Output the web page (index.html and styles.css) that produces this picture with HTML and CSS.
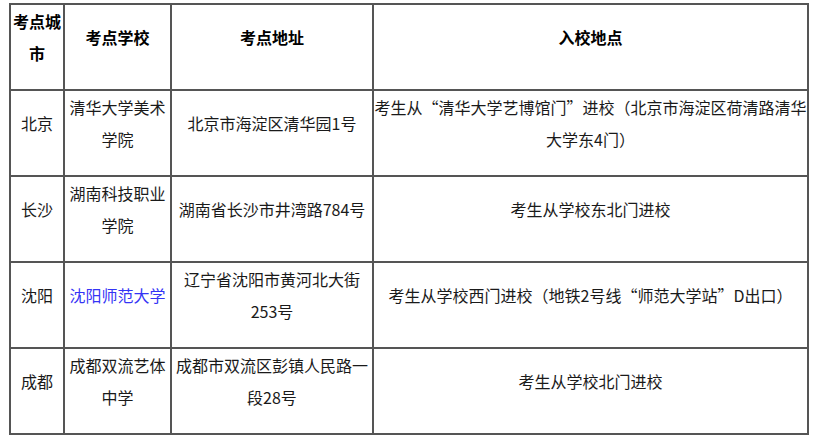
FILE: index.html
```html
<!DOCTYPE html>
<html lang="zh-CN">
<head>
<meta charset="utf-8">
<link rel="stylesheet" href="styles.css">
</head>
<body>
<table class="exam">
  <colgroup>
    <col class="c-city">
    <col class="c-school">
    <col class="c-addr">
    <col class="c-entry">
  </colgroup>
  <thead>
    <tr>
      <th>考点城市</th>
      <th>考点学校</th>
      <th>考点地址</th>
      <th>入校地点</th>
    </tr>
  </thead>
  <tbody>
    <tr>
      <td>北京</td>
      <td>清华大学美术学院</td>
      <td>北京市海淀区清华园1号</td>
      <td>考生从“清华大学艺博馆门”进校（北京市海淀区荷清路清华大学东4门）</td>
    </tr>
    <tr>
      <td>长沙</td>
      <td>湖南科技职业学院</td>
      <td>湖南省长沙市井湾路784号</td>
      <td>考生从学校东北门进校</td>
    </tr>
    <tr>
      <td>沈阳</td>
      <td><a class="link" href="#">沈阳师范大学</a></td>
      <td>辽宁省沈阳市黄河北大街253号</td>
      <td>考生从学校西门进校（地铁2号线“师范大学站”D出口）</td>
    </tr>
    <tr>
      <td>成都</td>
      <td>成都双流艺体中学</td>
      <td>成都市双流区彭镇人民路一段28号</td>
      <td>考生从学校北门进校</td>
    </tr>
  </tbody>
</table>
</body>
</html>
```

FILE: styles.css
```css
html, body {
  margin: 0;
  padding: 0;
  background: #fff;
}

body {
  font-family: "Noto Sans CJK SC", "Microsoft YaHei", sans-serif;
  font-size: 16px;
  color: #1a1a1a;
}

.exam {
  margin: 3px 0 0 9px;
  width: 800px;
  table-layout: fixed;
  border-collapse: separate;
  border-spacing: 0;
  border-left: 2px solid #555;
  border-top: 2px solid #555;
}

.c-city { width: 54px; }
.c-school { width: 107px; }
.c-addr { width: 202px; }
.c-entry { width: 435px; }

.exam th,
.exam td {
  box-sizing: border-box;
  height: 86px;
  padding: 0 1px 19px 1px;
  border-right: 2px solid #555;
  border-bottom: 2px solid #555;
  text-align: center;
  vertical-align: middle;
  line-height: 31.5px;
  font-size: 16px;
}

.exam th {
  font-weight: bold;
  color: #000;
}

.exam td:last-child,
.exam th:last-child {
  padding-left: 0;
  padding-right: 0;
}

.link {
  color: #3434f5;
  text-decoration: none;
}
```
